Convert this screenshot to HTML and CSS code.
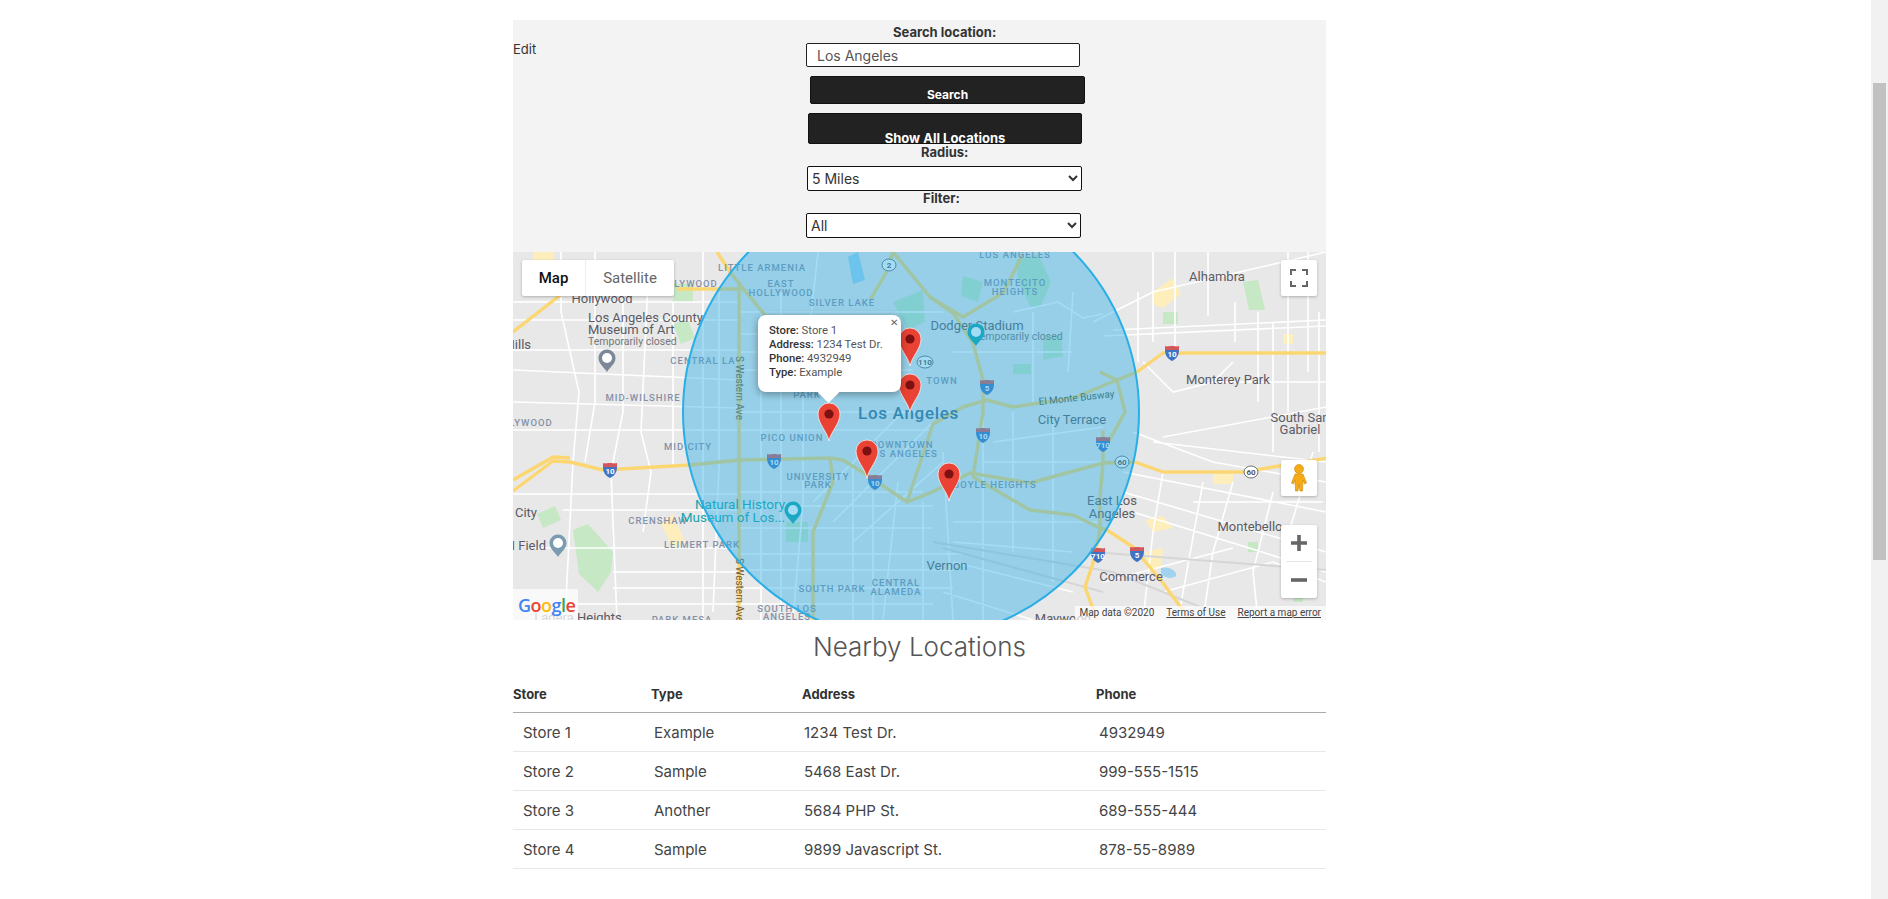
FILE: index.html
```html
<!DOCTYPE html>
<html lang="en">
<head>
    <meta charset="UTF-8">
    <meta name="viewport" content="width=device-width, initial-scale=1.0">
    <title>Store Locator</title>
    <link rel="stylesheet" href="styles.css">
</head>
<body>
    <main class="page">
        <section class="search-panel">
            <a class="edit-link" href="#">Edit</a>
            <form class="search-form">
                <label class="label-search" for="address">Search location:</label>
                <input class="input-address" type="text" id="address" value="Los Angeles">
                <button class="btn-search" type="button">Search</button>
                <button class="btn-all" type="button">Show All Locations</button>
                <label class="label-radius" for="radius">Radius:</label>
                <select class="select-radius" id="radius"><option>5 Miles</option></select>
                <label class="label-filter" for="filter">Filter:</label>
                <select class="select-filter" id="filter"><option>All</option></select>
            </form>
        </section>

        <section class="map">
            <svg class="map-canvas" viewBox="0 0 813 368" width="813" height="368">
                <defs>
                    <symbol id="pin" viewBox="-12 -12 24 40" overflow="visible">
                        <path d="M0 27C-2 17-11 10-11 0A11 11 0 1 1 11 0C11 10 2 17 0 27Z" fill="#ea4335" stroke="#fff" stroke-opacity=".7"/>
                        <circle r="4.6" fill="#7d1010"/>
                    </symbol>
                    <symbol id="shield" viewBox="0 0 16 16" overflow="visible">
                        <path d="M1 5H15C15 11 12 14 8 16C4 14 1 11 1 5Z" fill="#3f74c4"/>
                        <path d="M1 1C3 2 5 1 8 1C11 1 13 2 15 1V5H1Z" fill="#d2565a"/>
                    </symbol>
                    <symbol id="poi" viewBox="-9 -9 18 24" overflow="visible">
                        <path d="M0 14C-2 10-8.500 6-8.500 0A8.500 8.500 0 1 1 8.500 0C8.500 6 2 10 0 14Z"/>
                        <circle r="5" fill="#fff"/>
                    </symbol>
                </defs>

                <rect width="813" height="368" fill="#e8e8e8"/>

                <!-- parks and built up blocks -->
                <g class="park">
                    <path d="M60 278L75 272 100 300 98 320 85 340 66 322Z"/>
                    <path d="M24 262L42 254 48 268 30 276Z"/>
                    <path d="M273 270H295V290H273Z"/>
                    <path d="M160 32H180V50H160Z"/>
                    <path d="M160 72L175 68 182 86 168 92Z"/>
                    <path d="M503 8L525 2 538 30 527 56 517 54 505 28Z"/>
                    <path d="M530 82L548 84 550 104 530 108Z"/>
                    <path d="M500 112H518V122H500Z"/>
                    <path d="M730 30L745 28 752 58 736 58Z"/>
                    <path d="M650 60H665V72H650Z"/>
                    <path d="M450 24L470 30 465 50 448 44Z"/>
                    <path d="M380 50L410 38 412 70 395 78Z"/>
                    <path d="M780 340H790V350H780Z"/>
                    <path d="M735 290H745V300H735Z"/>
                </g>
                <g class="urban">
                    <path d="M640 40L660 26 668 42 650 56 640 52Z"/>
                    <path d="M148 272L160 262 172 290 160 296Z"/>
                    <path d="M632 268L650 264 660 276 640 280Z"/>
                    <path d="M632 300L650 296 648 316 636 320Z"/>
                    <path d="M700 222H720V232H700Z"/>
                    <path d="M770 82H780V92H770Z"/>
                    <path d="M20 0H40V8H20Z"/>
                </g>
                <path class="water" d="M648 316C655 314 664 318 663 324C658 328 646 326 648 316Z"/>
                <path class="water" d="M335 5L345 0 352 28 340 32Z"/>

                <!-- local streets -->
                <path class="street" d="M0 50H226M0 68H226M0 98H226M0 118L226 128M0 150L226 156M0 178H226M0 242H226M50 258H226M20 296H226M100 320H226M100 336H226M60 352H226
                    M48 0V60L66 140 60 210 52 368M82 0V150L72 210M110 40V160L98 220 104 368M135 30L128 180 138 220 130 280M160 50V215M190 0V368M206 40V215L200 360
                    M226 60H430M226 82H400M226 100H380M226 118H400M226 160H440M226 178H420M226 240H410M226 254H420M226 276H420M226 302H450M226 318H440M226 336H440M226 352H420
                    M248 60V368M268 40V368M290 100V250L280 368M305 0L294 100M340 210V368M360 240V368M385 230L370 368M410 250V368M430 200L440 368
                    M300 250L390 160M320 270L420 170M340 290L430 210M470 150V368M500 160V300M520 60V150M540 170V330
                    M440 100H560M500 60L545 50 570 66 590 62M480 190L590 175M470 210H590M440 270H585M440 290L560 300M440 310L560 340M430 340L520 368
                    M560 40L555 120M580 70L600 60 640 40 813 0M600 78L813 68M590 84L813 74
                    M625 40V110M640 0V90M662 0V100M695 0V64M722 50V90M745 60V150M775 0V160M795 0V120
                    M630 110L660 140 700 130 720 110M650 185L813 155M640 190L813 210M620 180L700 210 813 230M610 220L813 260M610 240L813 300M620 260L813 320
                    M650 220L640 280 630 368M690 230L665 368M720 230L700 300 690 368M760 240L740 320 745 368M800 200L770 300
                    M590 330L720 296M650 340L760 310 813 330M680 250L810 250M700 130L813 130M760 70V200M806 60V200"/>

                <!-- gray arterial lines -->
                <path class="rail" d="M420 290L600 320 700 360M430 296L590 340M580 300L813 318"/>

                <!-- freeways -->
                <g class="highway">
                    <path d="M0 239L40 209 57 210 90 218 177 213 227 208 317 206 330 208 354 223 394 250 417 241 457 221 517 231 590 211 622 210 650 220 730 220 814 206"/>
                    <path d="M0 228L40 205 57 206"/>
                    <path d="M460 225L517 258 560 263 587 276 594 278 620 295 650 331 677 368"/>
                    <path d="M590 178V211L587 245V278L580 311 572 335 584 368"/>
                    <path d="M624 120L650 101H813"/>
                    <path d="M624 120L604 128 560 146 500 155 474 148 450 155 420 172 394 250"/>
                    <path d="M0 80L50 41M164 37H230M204 0L217 20 250 61 300 110"/>
                    <path d="M226 30V368"/>
                    <path d="M300 368V280L320 230 317 206"/>
                    <path d="M380 0L417 45 440 61 460 91 470 128 470 160 460 225"/>
                    <path d="M417 45L450 65 490 41 510 2"/>
                    <path d="M357 48L373 21 380 0M300 110L360 130"/>
                    <path d="M587 120L604 128 612 160 590 200"/>
                </g>

                <!-- neighbourhood and place names -->
                <g class="hood">
                    <text x="249" y="19">LITTLE ARMENIA</text>
                    <text x="268" y="35">EAST</text>
                    <text x="268" y="44">HOLLYWOOD</text>
                    <text x="329" y="54">SILVER LAKE</text>
                    <text x="180" y="35">LLYWOOD</text>
                    <text x="190" y="112">CENTRAL LA</text>
                    <text x="130" y="149">MID-WILSHIRE</text>
                    <text x="294" y="146">PARK</text>
                    <text x="279" y="189">PICO UNION</text>
                    <text x="18" y="174">LYWOOD</text>
                    <text x="502" y="6">LOS ANGELES</text>
                    <text x="502" y="34">MONTECITO</text>
                    <text x="502" y="43">HEIGHTS</text>
                    <text x="389" y="196">DOWNTOWN</text>
                    <text x="389" y="205">LOS ANGELES</text>
                    <text x="429" y="132">TOWN</text>
                    <text x="175" y="198">MID CITY</text>
                    <text x="145" y="272">CRENSHAW</text>
                    <text x="189" y="296">LEIMERT PARK</text>
                    <text x="305" y="228">UNIVERSITY</text>
                    <text x="305" y="236">PARK</text>
                    <text x="319" y="340">SOUTH PARK</text>
                    <text x="383" y="334">CENTRAL</text>
                    <text x="383" y="343">ALAMEDA</text>
                    <text x="274" y="360">SOUTH LOS</text>
                    <text x="274" y="368">ANGELES</text>
                    <text x="169" y="371">PARK MESA</text>
                    <text x="482" y="236">BOYLE HEIGHTS</text>
                </g>
                <g class="place">
                    <text x="89" y="51">Hollywood</text>
                    <text x="75" y="70" class="start">Los Angeles County</text>
                    <text x="75" y="82" class="start">Museum of Art</text>
                    <text x="18" y="97" class="end">Hills</text>
                    <text x="464" y="78">Dodger Stadium</text>
                    <text x="559" y="172">City Terrace</text>
                    <text x="704" y="29">Alhambra</text>
                    <text x="715" y="132">Monterey Park</text>
                    <text x="787" y="170">South San</text>
                    <text x="787" y="182">Gabriel</text>
                    <text x="24" y="265" class="end">r City</text>
                    <text x="33" y="298" class="end">I Field</text>
                    <text x="65" y="370">Ladera Heights</text>
                    <text x="434" y="318">Vernon</text>
                    <text x="599" y="253">East Los</text>
                    <text x="599" y="266">Angeles</text>
                    <text x="737" y="279">Montebello</text>
                    <text x="618" y="329">Commerce</text>
                    <text x="550" y="371">Maywood</text>
                </g>
                <g class="note">
                    <text x="75" y="93">Temporarily closed</text>
                    <text x="461" y="88">Temporarily closed</text>
                </g>
                <text class="busway" transform="translate(526 153) rotate(-6)">El Monte Busway</text>
                <text class="street-name" transform="translate(223 104) rotate(90)">S Western Ave</text>
                <text class="street-name" transform="translate(223 306) rotate(90)">S Western Ave</text>
                <text class="museum" x="227" y="257">Natural History</text>
                <text class="museum" x="220" y="270">Museum of Los...</text>
                <text class="big-city" x="345" y="167">Los Angeles</text>

                <use href="#poi" x="85" y="97" width="18" height="24" class="poi-gray"/>
                <use href="#poi" x="271" y="249" width="18" height="24" class="poi-teal"/>
                <use href="#poi" x="36" y="282" width="18" height="24" class="poi-slate"/>
                <use href="#poi" x="454" y="71" width="18" height="24" class="poi-teal"/>

                <!-- route shields -->
                <use href="#shield" x="89" y="210" width="16" height="16"/>
                <use href="#shield" x="253" y="201" width="16" height="16"/>
                <use href="#shield" x="354" y="222" width="16" height="16"/>
                <use href="#shield" x="466" y="127" width="16" height="16"/>
                <use href="#shield" x="462" y="175" width="16" height="16"/>
                <use href="#shield" x="651" y="93" width="16" height="16"/>
                <use href="#shield" x="582" y="184" width="16" height="16"/>
                <use href="#shield" x="577" y="295" width="16" height="16"/>
                <use href="#shield" x="616" y="294" width="16" height="16"/>
                <g class="shield-num">
                    <text x="97" y="222">10</text>
                    <text x="261" y="213">10</text>
                    <text x="362" y="234">10</text>
                    <text x="474" y="139">5</text>
                    <text x="470" y="187">10</text>
                    <text x="659" y="105">10</text>
                    <text x="590" y="196">710</text>
                    <text x="585" y="307">710</text>
                    <text x="624" y="306">5</text>
                </g>
                <g class="state-route">
                    <ellipse cx="376" cy="13" rx="7" ry="6"/>
                    <ellipse cx="412" cy="110" rx="8" ry="6"/>
                    <ellipse cx="609" cy="210" rx="7" ry="6"/>
                    <ellipse cx="738" cy="220" rx="7" ry="6"/>
                </g>
                <g class="state-num">
                    <text x="376" y="16">2</text>
                    <text x="412" y="113">110</text>
                    <text x="609" y="213">60</text>
                    <text x="738" y="223">60</text>
                </g>

                <circle class="radius-circle" cx="398" cy="160" r="228"/>

                <use href="#pin" x="385" y="75" width="24" height="40"/>
                <use href="#pin" x="385" y="121" width="24" height="40"/>
                <use href="#pin" x="342" y="187" width="24" height="40"/>
                <use href="#pin" x="424" y="210" width="24" height="40"/>
                <use href="#pin" x="304" y="150" width="24" height="40"/>
            </svg>

            <div class="map-type">
                <span class="map-type-on">Map</span>
                <span class="map-type-off">Satellite</span>
            </div>

            <button class="map-btn btn-fullscreen" type="button" aria-label="Fullscreen">
                <svg width="18" height="18" viewBox="0 0 18 18"><path d="M1 6V1H6M12 1H17V6M17 12V17H12M6 17H1V12" fill="none" stroke="#666" stroke-width="2"/></svg>
            </button>
            <button class="map-btn btn-pegman" type="button" aria-label="Street View">
                <svg width="18" height="28" viewBox="0 0 18 28"><circle cx="9" cy="5" r="4.500" fill="#f5ab16" stroke="#c98a0c" stroke-width=".6"/><path d="M5 10H13L16.500 19 14.500 20 13 16 12.500 27H10L9 20 8 27H5.500L5 16 3.500 20 1.500 19Z" fill="#f5ab16" stroke="#c98a0c" stroke-width=".6"/></svg>
            </button>
            <div class="zoom-control">
                <button class="zoom-btn" type="button" aria-label="Zoom in">
                    <svg width="18" height="18" viewBox="0 0 18 18"><path d="M9 1V17M1 9H17" stroke="#666" stroke-width="3.600"/></svg>
                </button>
                <hr class="zoom-sep">
                <button class="zoom-btn" type="button" aria-label="Zoom out">
                    <svg width="18" height="18" viewBox="0 0 18 18"><path d="M1 9H17" stroke="#666" stroke-width="3.600"/></svg>
                </button>
            </div>

            <div class="info-window">
                <span class="info-close">&#x2715;</span>
                <div><b>Store:</b> Store 1</div>
                <div><b>Address:</b> 1234 Test Dr.</div>
                <div><b>Phone:</b> 4932949</div>
                <div><b>Type:</b> Example</div>
            </div>

            <div class="google-logo"><span class="g-blue">G</span><span class="g-red">o</span><span class="g-yellow">o</span><span class="g-blue">g</span><span class="g-green">l</span><span class="g-red">e</span></div>

            <div class="attribution">
                <span>Map data &#169;2020</span>
                <a href="#">Terms of Use</a>
                <a href="#">Report a map error</a>
            </div>
        </section>

        <h2 class="nearby-title">Nearby Locations</h2>
        <table class="nearby-table">
            <thead>
                <tr><th>Store</th><th>Type</th><th>Address</th><th>Phone</th></tr>
            </thead>
            <tbody>
                <tr><td>Store 1</td><td>Example</td><td>1234 Test Dr.</td><td>4932949</td></tr>
                <tr><td>Store 2</td><td>Sample</td><td>5468 East Dr.</td><td>999-555-1515</td></tr>
                <tr><td>Store 3</td><td>Another</td><td>5684 PHP St.</td><td>689-555-444</td></tr>
                <tr><td>Store 4</td><td>Sample</td><td>9899 Javascript St.</td><td>878-55-8989</td></tr>
            </tbody>
        </table>
    </main>
    <div class="scrollbar"><div class="scrollbar-thumb"></div></div>
</body>
</html>
```

FILE: styles.css
```css
html, body {
    height: 100%;
}

body {
    margin: 0;
    display: flex;
    overflow: hidden;
    background-color: white;
    color: #333;
    font-family: "Inter", "Liberation Sans", sans-serif;
    font-size: 14px;
}

.page {
    flex: 1;
    padding: 20px 0 0 513px;
}

.page > * {
    width: 813px;
}

/* search panel */
.search-panel {
    display: flex;
    height: 232px;
    background-color: #f3f3f3;
}

.edit-link {
    width: 293px;
    margin-top: 21px;
    color: #333;
    font-size: 13px;
    line-height: 17px;
    text-decoration: none;
}

.search-form {
    display: flex;
    flex-direction: column;
    align-items: flex-start;
    width: 280px;
}

.search-form label {
    font-size: 13px;
    font-weight: 700;
    line-height: 16px;
    color: #333;
}

.label-search {
    margin: 4px 0 0 87px;
}

.input-address {
    box-sizing: border-box;
    width: 274px;
    height: 24px;
    margin: 3px 0 0 0;
    padding: 0 10px;
    border: 1px solid #222;
    border-radius: 2px;
    color: #555;
    font: 14px "Inter", sans-serif;
}

.btn-search, .btn-all {
    display: block;
    padding: 0;
    border: 1px solid #111;
    border-radius: 2px;
    background-color: #222;
    color: white;
    font-family: "Inter", sans-serif;
    font-weight: 700;
    text-align: center;
}

.btn-search {
    width: 275px;
    height: 28px;
    margin: 9px 0 0 4px;
    padding-top: 9px;
    font-size: 12px;
}

.btn-all {
    width: 274px;
    height: 31px;
    margin: 9px 0 0 2px;
    padding-top: 17px;
    font-size: 13px;
    line-height: 14px;
    overflow: visible;
}

.label-radius {
    margin: 0 0 0 115px;
}

.search-form select {
    box-sizing: border-box;
    height: 25px;
    background-color: white;
    border: 1px solid #111;
    border-radius: 2px;
    color: #333;
    font: 14px "Inter", sans-serif;
}

.select-radius {
    width: 275px;
    margin: 6px 0 0 1px;
}

.label-filter {
    margin: -1px 0 0 117px;
}

.select-filter {
    width: 275px;
    margin: 7px 0 0 0;
}

/* map */
.map {
    position: relative;
    height: 368px;
    overflow: hidden;
    font-family: "Roboto", sans-serif;
}

.map-canvas {
    display: block;
}

.park { fill: #c6e8c4; }
.urban { fill: #fdeebc; }
.water { fill: #9fd3f0; }

.street {
    fill: none;
    stroke: white;
    stroke-width: 1.6;
}

.rail {
    fill: none;
    stroke: #d6d6d6;
    stroke-width: 2;
}

.highway path {
    fill: none;
    stroke: #fbd671;
    stroke-width: 3.4;
    stroke-linejoin: round;
}

.hood text {
    fill: #8490a8;
    font-size: 9.5px;
    font-weight: 500;
    letter-spacing: 1px;
    text-anchor: middle;
}

.place text {
    fill: #5b5b66;
    font-size: 13px;
    text-anchor: middle;
}

.place .start { text-anchor: start; }
.place .end { text-anchor: end; }

.note text {
    fill: #777;
    font-size: 10.5px;
}

.busway {
    fill: #4a5a50;
    font-size: 10px;
}

.street-name {
    fill: #6d5a3a;
    font-size: 10px;
}

.museum {
    fill: #12a3ab;
    font-size: 13.5px;
    text-anchor: middle;
}

.big-city {
    fill: #3c6b8f;
    font-size: 17px;
    font-weight: 500;
    letter-spacing: .7px;
}

.poi-gray { fill: #7c8798; }
.poi-teal { fill: #12a3ab; }
.poi-slate { fill: #7a9bb0; }

.shield-num text {
    fill: white;
    font-size: 8px;
    font-weight: 700;
    text-anchor: middle;
}

.state-route ellipse {
    fill: white;
    stroke: #6a7078;
}

.state-num text {
    fill: #555;
    font-size: 8px;
    font-weight: 700;
    text-anchor: middle;
}

.radius-circle {
    fill: rgba(41, 174, 230, 0.43);
    stroke: #29aee6;
    stroke-width: 2;
}

.map-type {
    position: absolute;
    top: 8px;
    left: 9px;
    display: flex;
    height: 36px;
    background-color: white;
    border-radius: 2px;
    box-shadow: 0 1px 3px rgba(0, 0, 0, 0.25);
    font-size: 15px;
    line-height: 36px;
}

.map-type-on {
    width: 63px;
    color: #111;
    font-weight: 500;
    text-align: center;
    border-right: 1px solid #eee;
}

.map-type-off {
    width: 88px;
    color: #666;
    text-align: center;
}

.map-btn, .zoom-control {
    position: absolute;
    left: 768px;
    width: 36px;
    background-color: white;
    border: none;
    border-radius: 2px;
    box-shadow: 0 1px 3px rgba(0, 0, 0, 0.25);
}

.map-btn {
    display: flex;
    height: 36px;
    padding: 0;
    align-items: center;
    justify-content: center;
}

.btn-fullscreen { top: 8px; }
.btn-pegman { top: 208px; }

.zoom-control {
    top: 273px;
    height: 73px;
}

.zoom-btn {
    display: flex;
    width: 36px;
    height: 36px;
    padding: 0;
    align-items: center;
    justify-content: center;
    background: none;
    border: none;
}

.zoom-sep {
    height: 1px;
    margin: 0 5px;
    background-color: #e6e6e6;
    border: none;
}

.info-window {
    position: absolute;
    top: 63px;
    left: 245px;
    box-sizing: border-box;
    width: 143px;
    height: 77px;
    padding: 9px 0 0 11px;
    background-color: white;
    border-radius: 8px;
    box-shadow: 0 2px 7px 1px rgba(0, 0, 0, 0.3);
    color: #555;
    font-size: 11.3px;
    line-height: 14px;
    white-space: nowrap;
}

.info-window::after {
    content: "";
    position: absolute;
    top: 70px;
    left: 63px;
    width: 15px;
    height: 15px;
    background-color: white;
    transform: rotate(45deg);
}

.info-window b {
    color: #333;
    font-weight: 500;
}

.info-close {
    position: absolute;
    top: 0;
    right: 3px;
    color: #666;
    font-size: 10px;
    line-height: 16px;
}

.google-logo {
    position: absolute;
    left: 0;
    bottom: 0;
    box-sizing: border-box;
    width: 65px;
    height: 31px;
    padding: 4px 0 0 5px;
    background-color: rgba(255, 255, 255, 0.75);
    font-family: "Open Sans", sans-serif;
    font-size: 18px;
    font-weight: 600;
    line-height: 24px;
    letter-spacing: -.5px;
}

.g-blue { color: #4285f4; }
.g-red { color: #ea4335; }
.g-yellow { color: #fbbc05; }
.g-green { color: #34a853; }

.attribution {
    position: absolute;
    right: 0;
    bottom: 0;
    display: flex;
    gap: 12px;
    height: 14px;
    padding: 0 5px 0 4px;
    background-color: rgba(255, 255, 255, 0.7);
    color: #444;
    font-size: 10px;
    line-height: 14px;
    white-space: nowrap;
}

.attribution a {
    color: #444;
}

/* nearby table */
.nearby-title {
    margin: 0;
    padding: 9px 0 0 0;
    color: #555;
    font-size: 26px;
    font-weight: 300;
    line-height: 36px;
    text-align: center;
}

.nearby-table {
    table-layout: fixed;
    margin-top: 11px;
    border-collapse: collapse;
}

.nearby-table th {
    height: 36px;
    padding: 0;
    border-bottom: 1px solid #aaa;
    color: #333;
    font-size: 13px;
    font-weight: 700;
    text-align: left;
}

.nearby-table td {
    height: 38px;
    padding: 0;
    border-bottom: 1px solid #e8e8e8;
    color: #444;
    font-size: 15px;
}

.nearby-table th:nth-child(1) { width: 138px; }
.nearby-table th:nth-child(2) { width: 151px; }
.nearby-table th:nth-child(3) { width: 294px; }

.nearby-table td:nth-child(1) { padding-left: 10px; }
.nearby-table td:nth-child(2) { padding-left: 3px; }
.nearby-table td:nth-child(3) { padding-left: 2px; }
.nearby-table td:nth-child(4) { padding-left: 3px; }

/* page scrollbar */
.scrollbar {
    flex: none;
    width: 13px;
    padding: 0 2px;
    background-color: #f1f1f1;
}

.scrollbar-thumb {
    height: 477px;
    margin-top: 83px;
    background-color: #c1c1c1;
}
```
